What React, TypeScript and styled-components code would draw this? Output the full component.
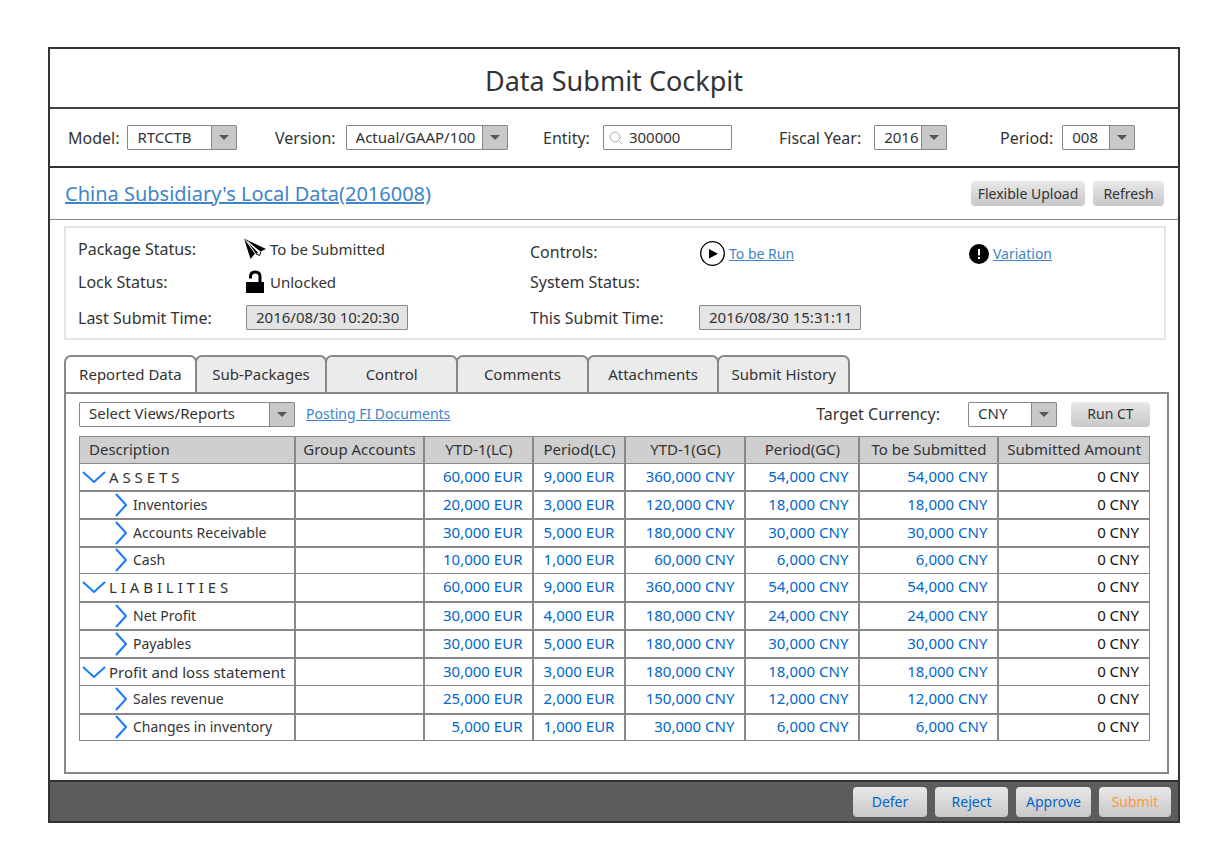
import React from "react";
import styled, { createGlobalStyle } from "styled-components";

const Global = createGlobalStyle`
  * { box-sizing: border-box; }
  body { margin: 0; background: #fff; color: #333; font: 14px/20px "Noto Sans", sans-serif; }
  button, input, select { font: inherit; color: inherit; }
`;

const Page = styled.div`padding: 47px 31px 31px 48px;`;

const Window = styled.main`
  display: flex;
  flex-direction: column;
  border: 2px solid #333;
`;

const Title = styled.h1`
  margin: 0;
  height: 60px;
  padding-top: 4px;
  border-bottom: 2px solid #444;
  font-size: 27px;
  font-weight: 400;
  line-height: 56px;
  text-align: center;
`;

const Filters = styled.div`
  display: grid;
  grid-template-columns: 207fr 268fr 236fr 221fr 136fr;
  align-items: center;
  height: 59px;
  padding: 0 42px 0 18px;
  border-bottom: 2px solid #333;
`;

const Field = styled.div`display: flex; align-items: center;`;

const Label = styled.label<{ $gap?: number }>`
  font-size: 16px;
  line-height: 24px;
  margin-right: ${(p) => p.$gap ?? 13}px;
`;

const SelectWrap = styled.div<{ $w: number }>`
  display: flex;
  position: relative;
  width: ${(p) => p.$w}px;
  height: 25px;
  border: 1px solid #888;
  border-radius: 1px;
  background: #fff;
`;

const NativeSelect = styled.select`
  appearance: none;
  width: 100%;
  padding: 0 24px 2px 9px;
  border: 0;
  background: transparent;
  font-size: 15px;
  line-height: 20px;
`;

const Arrow = styled.span`
  position: absolute;
  top: 0;
  right: 0;
  bottom: 0;
  display: flex;
  align-items: center;
  justify-content: center;
  width: 25px;
  border-left: 1px solid #888;
  background: #c8c8c8;
  pointer-events: none;
`;

function Select({ id, value, width, label }: { id: string; value: string; width: number; label?: string }) {
  return (
    <SelectWrap $w={width}>
      <NativeSelect id={id} aria-label={label} defaultValue={value}>
        <option>{value}</option>
      </NativeSelect>
      <Arrow>
        <svg width="10" height="5" viewBox="0 0 10 5"><path d="M0 0H10L5 5Z" fill="#555" /></svg>
      </Arrow>
    </SelectWrap>
  );
}

const SearchBox = styled.div`
  display: flex;
  align-items: center;
  gap: 6px;
  width: 129px;
  height: 25px;
  padding-left: 5px;
  border: 1px solid #888;
  border-radius: 1px;
`;

const SearchInput = styled.input`
  flex: 1;
  min-width: 0;
  padding: 0 0 2px;
  border: 0;
  background: transparent;
  font-size: 15px;
`;

const Heading = styled.div`
  display: flex;
  align-items: center;
  gap: 8px;
  height: 52px;
  padding: 0 14px 0 15px;
  border-bottom: 1px solid #888;
`;

const Link = styled.a<{ $large?: boolean }>`
  color: #4184c8;
  text-decoration: underline;
  font-size: ${(p) => (p.$large ? 20 : 14)}px;
  line-height: ${(p) => (p.$large ? 28 : 20)}px;
`;

const Spacer = styled.span`flex: 1;`;

const Button = styled.button<{ $w: number; $tall?: boolean; $color?: string }>`
  width: ${(p) => p.$w}px;
  height: ${(p) => (p.$tall ? 30 : 25)}px;
  padding: 0;
  border: 0;
  border-radius: 4px;
  background: linear-gradient(#e8e8e8, #c8c8c8);
  color: ${(p) => p.$color ?? "#333"};
  white-space: nowrap;
`;

const Status = styled.section`
  display: grid;
  grid-template-columns: 166px 286px 169px 269px 1fr;
  grid-template-rows: 36px 29px 43px;
  align-items: center;
  margin: 6px 12px 0 14px;
  padding: 3px 0 0 12px;
  height: 114px;
  border: 2px solid #e4e4e4;
`;

const StatusLabel = styled.label<{ $low?: boolean }>`
  padding-top: ${(p) => (p.$low ? 5 : 0)}px;
  font-size: 16px;
  line-height: 24px;
`;

const StatusValue = styled.div<{ $low?: boolean }>`
  display: flex;
  align-items: center;
  gap: 4px;
  padding: ${(p) => (p.$low ? "9px 0 0 1px" : "0")};
  font-size: 15px;
`;

const TimeInput = styled.input`
  width: 162px;
  height: 25px;
  padding: 0 0 2px 9px;
  border: 1px solid #888;
  border-radius: 1px;
  background: #e4e4e4;
  font-size: 15px;
`;

const TimeCell = styled.div<{ $indent?: boolean }>`
  display: flex;
  padding-left: ${(p) => (p.$indent ? 2 : 0)}px;
`;

const Tabs = styled.div`
  display: flex;
  max-width: 786px;
  margin: 15px 11px 0 14px;
`;

const Tab = styled.button<{ $active?: boolean }>`
  flex: 1 1 0;
  height: 39px;
  margin: 0 -2px -2px 0;
  padding: 0 0 2px;
  border: 2px solid #888;
  border-radius: 7px 7px 0 0;
  background: ${(p) => (p.$active ? "#fff" : "#ebebeb")};
  font-size: 15px;
  white-space: nowrap;
  &:last-child { margin-right: 0; }
`;

const Panel = styled.section`
  margin: 0 9px 6px 14px;
  padding: 7px 17px 31px 13px;
  border: 2px solid #888;
`;

const Toolbar = styled.div`
  display: flex;
  align-items: center;
  height: 26px;
  margin-bottom: 9px;
`;

const Gap = styled.span<{ $w: number }>`width: ${(p) => p.$w}px;`;

const Table = styled.table`
  width: 100%;
  table-layout: fixed;
  border-collapse: collapse;
  border: 1px solid #888;
  font-size: 15px;
`;

const Th = styled.th<{ $left?: boolean }>`
  height: 27px;
  padding: 0 ${(p) => (p.$left ? 9 : 7)}px 2px;
  border: 1px solid #888;
  border-width: 1px 2px;
  background: #cfcfcf;
  font-weight: 400;
  text-align: ${(p) => (p.$left ? "left" : "center")};
  white-space: nowrap;
  &:first-child { border-left-width: 1px; }
  &:last-child { border-right-width: 1px; }
`;

const Row = styled.tr<{ $thin?: boolean; $short?: boolean }>`
  height: ${(p) => (p.$short ? 27 : 28)}px;
  > td { border-bottom-width: ${(p) => (p.$thin ? 1 : 2)}px; }
`;

const Td = styled.td<{ $kind?: "name" | "total" }>`
  padding: ${(p) => (p.$kind === "name" ? "0 0 0 2px" : "0 10px 2px 0")};
  border: 0 solid #888;
  border-left-width: 2px;
  border-right-width: 2px;
  color: ${(p) => (p.$kind === "name" ? "#333" : p.$kind === "total" ? "#111" : "#0066cc")};
  text-align: ${(p) => (p.$kind === "name" ? "left" : "right")};
  white-space: nowrap;
  &:first-child { border-left-width: 1px; }
  &:last-child { border-right-width: 1px; }
`;

const RowName = styled.div<{ $child?: boolean }>`
  display: flex;
  align-items: center;
  gap: ${(p) => (p.$child ? 6 : 3)}px;
  height: 24px;
  padding-left: ${(p) => (p.$child ? 33 : 0)}px;
  font-size: ${(p) => (p.$child ? 14 : 15)}px;
`;

const Footer = styled.footer`
  display: flex;
  align-items: center;
  justify-content: flex-end;
  gap: 8px;
  height: 41px;
  padding-right: 7px;
  border-top: 2px solid #333;
  background: #5c5c5c;
`;

const columns: [string, number][] = [
  ["Description", 215], ["Group Accounts", 130], ["YTD-1(LC)", 109], ["Period(LC)", 92],
  ["YTD-1(GC)", 120], ["Period(GC)", 114], ["To be Submitted", 139], ["Submitted Amount", 151],
];

const rows: [string, number, string, string, string, string][] = [
  ["A S S E T S", 0, "60,000", "9,000", "360,000", "54,000"],
  ["Inventories", 1, "20,000", "3,000", "120,000", "18,000"],
  ["Accounts Receivable", 1, "30,000", "5,000", "180,000", "30,000"],
  ["Cash", 1, "10,000", "1,000", "60,000", "6,000"],
  ["L I A B I L I T I E S", 0, "60,000", "9,000", "360,000", "54,000"],
  ["Net Profit", 1, "30,000", "4,000", "180,000", "24,000"],
  ["Payables", 1, "30,000", "5,000", "180,000", "30,000"],
  ["Profit and loss statement", 0, "30,000", "3,000", "180,000", "18,000"],
  ["Sales revenue", 1, "25,000", "2,000", "150,000", "12,000"],
  ["Changes in inventory", 1, "5,000", "1,000", "30,000", "6,000"],
];

const thinRows = [3, 7, 9];
const shortRows = [0, 3, 9];

const tabs = ["Reported Data", "Sub-Packages", "Control", "Comments", "Attachments", "Submit History"];

const Chevron = ({ open }: { open: boolean }) =>
  open ? (
    <svg width="24" height="12" viewBox="0 0 24 12"><path d="M1 1L12 11L23 1" fill="none" stroke="#1a7cf9" strokeWidth="2" /></svg>
  ) : (
    <svg width="12" height="24" viewBox="0 0 12 24"><path d="M1 1L11 12L1 23" fill="none" stroke="#1a7cf9" strokeWidth="2" /></svg>
  );

export default function App() {
  return (
    <Page>
      <Global />
      <Window>
        <Title>Data Submit Cockpit</Title>
        <Filters>
          <Field><Label htmlFor="model" $gap={8}>Model:</Label><Select id="model" value="RTCCTB" width={110} /></Field>
          <Field><Label htmlFor="version" $gap={10}>Version:</Label><Select id="version" value="Actual/GAAP/100" width={162} /></Field>
          <Field>
            <Label htmlFor="entity">Entity:</Label>
            <SearchBox>
              <svg width="14" height="14" viewBox="0 0 14 14" fill="none" stroke="#aaa"><circle cx="6" cy="6" r="5" /><path d="M9.5 9.5L13 13" /></svg>
              <SearchInput id="entity" defaultValue="300000" />
            </SearchBox>
          </Field>
          <Field><Label htmlFor="year">Fiscal Year:</Label><Select id="year" value="2016" width={73} /></Field>
          <Field><Label htmlFor="period" $gap={9}>Period:</Label><Select id="period" value="008" width={73} /></Field>
        </Filters>
        <Heading>
          <Link href="#data" $large>China Subsidiary's Local Data(2016008)</Link>
          <Spacer />
          <Button $w={114}>Flexible Upload</Button>
          <Button $w={71}>Refresh</Button>
        </Heading>
        <Status>
          <StatusLabel as="span">Package Status:</StatusLabel>
          <StatusValue>
            <svg width="22" height="22" viewBox="0 0 22 22">
              <path d="M0 0.500L11 15.500L6.500 21Z" />
              <path d="M0 0.500L22 11L16.500 13.500Z" />
              <path d="M2 2.500L14 14.500L12 16Z" />
              <path d="M11.500 15.500L15.500 17.500L17 13.500" fill="none" stroke="#000" strokeWidth="1" />
              <path d="M3 3.500L11.500 16M4 3.500L16 15" stroke="#fff" strokeWidth="0.800" />
            </svg>
            To be Submitted
          </StatusValue>
          <StatusLabel as="span" $low>Controls:</StatusLabel>
          <StatusValue $low>
            <svg width="25" height="25" viewBox="0 0 25 25"><circle cx="12.500" cy="12.500" r="11.800" fill="none" stroke="#000" strokeWidth="1.300" /><path d="M9 8V17.500L18 12.700Z" /></svg>
            <Link href="#run">To be Run</Link>
          </StatusValue>
          <StatusValue $low>
            <svg width="20" height="20" viewBox="0 0 20 20"><circle cx="10" cy="10" r="10" /><path d="M10 5V11.500M10 13V15" stroke="#fff" strokeWidth="2" /></svg>
            <Link href="#variation">Variation</Link>
          </StatusValue>
          <StatusLabel as="span">Lock Status:</StatusLabel>
          <StatusValue>
            <svg width="22" height="23" viewBox="0 0 22 23"><path d="M2 12H20V23H2Z" /><path d="M6.500 8.500V6.500Q6.500 2 11.200 2Q16 2 16 6.500V13" fill="none" stroke="#000" strokeWidth="3" /></svg>
            Unlocked
          </StatusValue>
          <StatusLabel as="span">System Status:</StatusLabel>
          <span /><span />
          <StatusLabel htmlFor="last">Last Submit Time:</StatusLabel>
          <TimeCell $indent><TimeInput id="last" readOnly value="2016/08/30 10:20:30" /></TimeCell>
          <StatusLabel htmlFor="this">This Submit Time:</StatusLabel>
          <TimeCell><TimeInput id="this" readOnly value="2016/08/30 15:31:11" /></TimeCell>
        </Status>
        <Tabs role="tablist">
          {tabs.map((t, i) => <Tab key={t} role="tab" aria-selected={i === 0} $active={i === 0}>{t}</Tab>)}
        </Tabs>
        <Panel>
          <Toolbar>
            <Select id="views" label="Views and reports" value="Select Views/Reports" width={216} />
            <Gap $w={11} />
            <Link href="#posting">Posting FI Documents</Link>
            <Spacer />
            <Label htmlFor="currency" $gap={28}>Target Currency:</Label>
            <Select id="currency" value="CNY" width={89} />
            <Gap $w={14} />
            <Button $w={79}>Run CT</Button>
          </Toolbar>
          <Table>
            <colgroup>{columns.map(([c, w]) => <col key={c} style={{ width: `${(w / 1070) * 100}%` }} />)}</colgroup>
            <thead><tr>{columns.map(([c], i) => <Th key={c} $left={i === 0}>{c}</Th>)}</tr></thead>
            <tbody>
              {rows.map(([name, child, ytdL, perL, ytdG, perG], i) => (
                <Row key={name} $thin={thinRows.includes(i)} $short={shortRows.includes(i)}>
                  <Td $kind="name"><RowName $child={!!child}><Chevron open={!child} />{name}</RowName></Td>
                  <Td />
                  <Td>{ytdL} EUR</Td>
                  <Td>{perL} EUR</Td>
                  <Td>{ytdG} CNY</Td>
                  <Td>{perG} CNY</Td>
                  <Td>{perG} CNY</Td>
                  <Td $kind="total">0 CNY</Td>
                </Row>
              ))}
            </tbody>
          </Table>
        </Panel>
        <Footer>
          <Button $w={74} $tall $color="#0066cc">Defer</Button>
          <Button $w={73} $tall $color="#0066cc">Reject</Button>
          <Button $w={75} $tall $color="#0066cc">Approve</Button>
          <Button $w={72} $tall $color="#ff9933">Submit</Button>
        </Footer>
      </Window>
    </Page>
  );
}
